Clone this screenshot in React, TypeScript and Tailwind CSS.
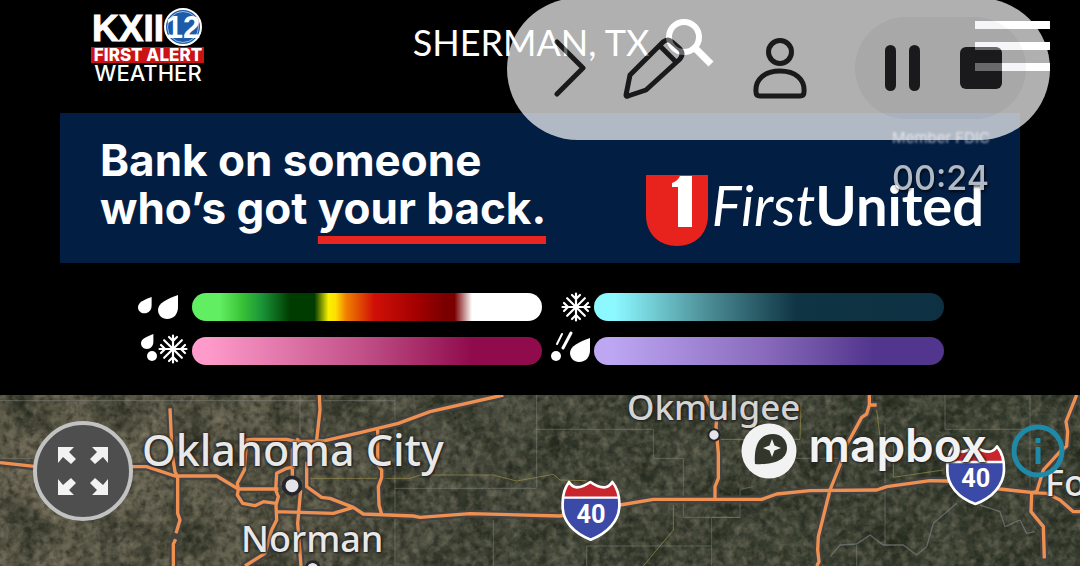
import type { ReactNode } from 'react'

const DROP = 'M20 0C9 4 0 8 0 15c0 5 4 9 9 9 7 0 11-5 11-12z'

// Map drawing units are a third of a pixel
const ROADS = [
  'M0 218L110 230H440L525 258H650L715 297H835',
  'M510 55L516 190L525 245L533 260V370L540 390L528 430',
  'M527 448L520 462V528',
  'M715 297L712 280L733 240L740 150L760 148H860L890 155L975 152L1080 128L1195 100L1290 65L1510 15',
  'M958 15L960 60L950 150',
  'M895 145L877 180V280',
  'M885 230L860 235L830 250L827 300L835 320L828 345L830 390L815 420L795 490L735 528',
  'M920 215V290L965 322L990 325L1060 352L1090 372L1240 378L1260 382L1410 371L1680 378L1860 345L1960 328H2285L2330 312L2430 302L2630 300L2660 290L2790 272L2840 273L3000 297L3100 308L3140 310L3180 330L3220 365H3240',
  'M715 298L712 315L728 340L765 347L790 335L828 340',
  'M830 365L1000 370L1060 352',
  'M902 300L893 400L903 528',
  'M1133 120V225L1145 240V262L1135 290L1137 345L1145 372',
  'M2115 15L2150 90L2148 110L2155 190V265L2145 290V325',
  'M2608 15V45H2630M2608 45L2600 72L2585 82L2540 165L2520 225L2490 300L2455 440L2453 480L2457 515L2450 528',
  'M3230 15L3198 95L3203 125L3200 168L3180 185L3130 240L3110 305L3095 308L3093 365L3130 410L3133 505',
]

const COUNTY_LINES =
  'M0 32H1185M1185 15V528M1185 295H1610M1610 15V290M1610 118H1960V205H2050V382H2220L2135 382V528M1480 390V528M1760 528V468H2135M2220 382V298L2260 290M2835 15V118H3090M3090 15V290M2655 100V465M2260 205H2540M2570 528V465M0 205H100M900 15V130'

const RIVERS =
  'M2490 500L2520 465L2570 462L2610 435L2650 465L2710 465L2750 495L2780 470L2800 400L2870 340M2940 345L3000 365L3015 410L3060 390L3080 430L3105 425'

const TRAILS =
  'M930 265H1230L1260 255H1480L1550 273L1660 253L1680 270L1760 272M2160 148H2400L2403 40M2020 345V420L1930 528M2630 60L2640 140L2680 160V262L2830 240'

function Snowflake({ x, y, r }: { x: number; y: number; r: number }) {
  return (
    <g transform={`translate(${x} ${y}) scale(${r / 14})`} stroke="#fff" strokeWidth="2.2" strokeLinecap="round" fill="none">
      {[0, 45, 90, 135, 180, 225, 270, 315].map((a) => (
        <path key={a} transform={`rotate(${a})`} d={a % 90 ? 'M0 0V-12.5' : 'M0 0V-13.5M-4 -12L0 -8L4 -12'} />
      ))}
    </g>
  )
}

function LegendIcon({ label, children }: { label: string; children: ReactNode }) {
  return (
    <svg role="img" aria-label={label} className="h-7 w-full overflow-visible" viewBox="0 0 54 28" preserveAspectRatio="xMinYMid slice" fill="#fff">
      {children}
    </svg>
  )
}

function Shield({ x, y }: { x: number; y: number }) {
  return (
    <g transform={`translate(${x} ${y})`}>
      <path
        d="M23 4Q33 20 47 20Q64 20 87 4Q109 20 128 20Q143 20 153 4Q176 32 174 76C173 120 139 158 88 177C37 158 3 120 4 76Q2 32 23 4Z"
        fill="#3b4aa6"
      />
      <path d="M23 4Q33 20 47 20Q64 20 87 4Q109 20 128 20Q143 20 153 4Q176 26 174 50H4Q5 26 23 4Z" fill="#c9252c" />
      <path d="M4 51H174" stroke="#fff" strokeWidth="7" />
      <path
        d="M23 4Q33 20 47 20Q64 20 87 4Q109 20 128 20Q143 20 153 4Q176 32 174 76C173 120 139 158 88 177C37 158 3 120 4 76Q2 32 23 4Z"
        fill="none"
        stroke="#fff"
        strokeWidth="8"
        strokeLinejoin="round"
      />
      <text x="89" y="126" textAnchor="middle" fontFamily="Roboto, sans-serif" fontWeight="700" fontSize="76" fill="#fff">
        40
      </text>
    </g>
  )
}

function StationLogo() {
  return (
    <svg width="116" height="76" viewBox="90 8 116 76" role="img" aria-label="KXII 12 First Alert Weather">
      <g fontFamily="Inter, sans-serif" fill="#fff">
        <text x="92" y="41" fontFamily="Liberation Sans, sans-serif" fontWeight="700" fontSize="37" stroke="#fff">KXII</text>
        <circle cx="183" cy="27" r="18" fill="#1c5ba8" stroke="#fff" strokeWidth="2" />
        <circle cx="183" cy="27" r="15.5" fill="none" stroke="#9dbbe0" strokeWidth="1" />
        <text x="183" y="38" textAnchor="middle" fontFamily="Liberation Sans, sans-serif" fontWeight="700" fontSize="31">12</text>
        <rect x="91" y="47" width="113" height="16" fill="#cc1212" />
        <text x="148" y="61" textAnchor="middle" fontWeight="800" fontSize="17">FIRST ALERT</text>
        <text x="148" y="81" textAnchor="middle" fontWeight="500" fontSize="22">WEATHER</text>
      </g>
    </svg>
  )
}

function Header() {
  return (
    <header className="grid h-[113px] grid-cols-[1fr_auto_1fr] items-start pt-2 pr-[30px] pl-[78px]">
      <a href="#home" className="justify-self-start pl-3">
        <StationLogo />
      </a>
      <button className="flex h-[68px] items-center gap-4 font-[Lato] text-[36px] leading-[68px] text-white">
        SHERMAN, TX
        <svg width="50" height="50" viewBox="0 0 50 50" fill="none" stroke="#fff">
          <circle cx="19" cy="20" r="15" strokeWidth="6" />
          <path d="M30 31L46 47" strokeWidth="7" />
        </svg>
      </button>
      <button aria-label="Menu" className="mt-3 flex w-[75px] flex-col gap-[13px] justify-self-end pt-px">
        <span className="h-2 bg-white" />
        <span className="h-2 bg-white" />
        <span className="h-2 bg-white" />
      </button>
    </header>
  )
}

function AdBanner() {
  return (
    <a href="#first-united" className="relative mx-[60px] flex h-[150px] items-start justify-between bg-[#031e43] pt-[23px] pr-[36px] pl-10 text-white">
      <p className="font-[Inter] text-[44px] leading-[48px] font-bold">
        Bank on someone
        <br />
        who’s got{' '}
        <span className="underline decoration-[#e8251f] decoration-8 underline-offset-[12px] [text-decoration-skip-ink:none]">your back.</span>
      </p>
      <div className="mt-[39px] flex items-start gap-1">
        <svg width="62" height="71" viewBox="0 0 62 71">
          <path d="M0 0H62V40C62 60 48 71 31 71S0 60 0 40Z" fill="#e8231d" />
          <path d="M26 8Q32 6 34 1H46V52H32V12H26Z" fill="#fff" />
        </svg>
        <span className="font-[Lato] text-[56px] leading-[60px]">
          <i>First</i>
          <b>United</b>
        </span>
      </div>
      <span className="absolute top-[14px] right-[30px] font-[Inter] text-[15px] text-[#a9afbd] blur-[1px]">Member FDIC</span>
    </a>
  )
}

function Legend() {
  return (
    <section className="mx-auto grid grid-cols-[54px_350px_52px_350px] gap-y-4 py-[30px] pl-0.5">
      <LegendIcon label="Rain">
        <path d={DROP} transform="translate(0 4) scale(.68)" />
        <path d={DROP} transform="translate(20 2)" />
      </LegendIcon>
      <div className="rounded-full bg-[linear-gradient(90deg,#62ee62_8%,#3bc437_14%,#1a9438_20%,#003c00_28%,#003c00_35%,#f8f000_39%,#ffe000_41%,#f08000_44%,#d01008_52%,#a00000_65%,#7a0000_72%,#7a0000_75%,#fff_80%)]" />
      <LegendIcon label="Snow">
        <Snowflake x={34} y={14} r={14} />
      </LegendIcon>
      <div className="rounded-full bg-[linear-gradient(90deg,#8cf8ff_6%,#4d8f97_32%,#0f3443_58%,#0d3142_100%)]" />
      <LegendIcon label="Wintry mix">
        <path d={DROP} transform="translate(3 -3) scale(.62)" />
        <circle cx="14" cy="19" r="5" />
        <Snowflake x={35} y={12} r={14} />
      </LegendIcon>
      <div className="rounded-full bg-[linear-gradient(90deg,#ff9bcb_4%,#c25289_48%,#8f0b4c_80%)]" />
      <LegendIcon label="Freezing rain">
        <path d="M20 -3L15 7" stroke="#fff" strokeWidth="2" strokeLinecap="round" />
        <path d="M29 -4L21 11" stroke="#fff" strokeWidth="3" strokeLinecap="round" />
        <circle cx="14" cy="19" r="5" />
        <path d={DROP} transform="translate(28 1)" />
      </LegendIcon>
      <div className="rounded-full bg-[linear-gradient(90deg,#bda6f2_5%,#8a6bbd_48%,#52358c_80%)]" />
    </section>
  )
}

function MapCanvas() {
  return (
    <svg
      className="absolute inset-0 h-full w-full [text-shadow:none]"
      viewBox="0 15 3240 513"
      preserveAspectRatio="xMinYMin slice"
      aria-hidden="true"
    >
      <defs>
        <linearGradient id="land">
          <stop offset="0" stopColor="#6b6553" />
          <stop offset=".25" stopColor="#605d4c" />
          <stop offset=".42" stopColor="#4a4d3f" />
          <stop offset="1" stopColor="#3d4435" />
        </linearGradient>
        <filter id="shade" x="0" y="0" width="100%" height="100%" colorInterpolationFilters="sRGB">
          <feTurbulence type="fractalNoise" baseFrequency=".05" numOctaves="3" seed="4" />
          <feColorMatrix values="0 0 0 0 .1  0 0 0 0 .11  0 0 0 0 .08  1.3 0 0 0 -.5" />
        </filter>
        <filter id="light" x="0" y="0" width="100%" height="100%" colorInterpolationFilters="sRGB">
          <feTurbulence type="fractalNoise" baseFrequency=".04" numOctaves="4" seed="11" />
          <feColorMatrix values="0 0 0 0 .6  0 0 0 0 .57  0 0 0 0 .48  0 .9 0 0 -.36" />
        </filter>
        <filter id="patches" x="0" y="0" width="100%" height="100%" colorInterpolationFilters="sRGB">
          <feTurbulence type="fractalNoise" baseFrequency=".008" numOctaves="3" seed="7" />
          <feColorMatrix values="0 0 0 0 .1  0 0 0 0 .13  0 0 0 0 .08  0 0 1.5 0 -.55" />
        </filter>
      </defs>
      <rect y="15" width="3240" height="513" fill="url(#land)" />
      <rect y="15" width="3240" height="513" filter="url(#patches)" />
      <rect y="15" width="3240" height="513" filter="url(#shade)" />
      <rect y="15" width="3240" height="513" filter="url(#light)" />
      <g fill="none" strokeLinejoin="round">
        <path d={COUNTY_LINES} stroke="#8b8d89" strokeOpacity=".45" strokeWidth="3" />
        <path d={RIVERS} stroke="#82878a" strokeOpacity=".6" strokeWidth="4" />
        <path d={TRAILS} stroke="#a39a4c" strokeOpacity=".6" strokeWidth="3" />
        <path d={ROADS.join('')} stroke="#444342" strokeWidth="23" strokeLinecap="round" />
        <path d={ROADS.join('')} stroke="#ee9150" strokeWidth="10" />
      </g>
      <g fill="#e4e4e8" stroke="#26252a">
        <circle cx="876" cy="287" r="25" strokeWidth="11" />
        <circle cx="938" cy="535" r="20" strokeWidth="8" />
        <circle cx="2142" cy="135" r="17" strokeWidth="6" />
      </g>
      <Shield x={1684} y={272} />
      <Shield x={2838} y={165} />
    </svg>
  )
}

function RadarMap() {
  return (
    <main className="relative min-h-[171px] flex-1 overflow-hidden bg-[#414233] font-['Noto_Sans'] leading-none font-medium whitespace-nowrap text-[#e8e8e8] [text-shadow:0_0_3px_#222,0_0_3px_#222,1px_1px_2px_#222]">
      <MapCanvas />
      <span className="absolute top-[33px] left-[142px] text-[43px]">Oklahoma City</span>
      <span className="absolute top-[126px] left-[241px] text-[36px]">Norman</span>
      <span className="absolute top-[-6px] left-[627px] text-[35px] text-[#d4d4d4]">Okmulgee</span>
      <span className="absolute top-[70px] left-[1045px] text-[36px]">Fort Smith</span>

      <button aria-label="Full screen" className="absolute top-[26px] left-[33px] size-[100px] rounded-full border-4 border-[#c2c2c2] bg-[#4e4e4e]">
        <svg className="mx-auto" width="50" height="48" viewBox="0 0 50 48" fill="#f2f2f2">
          <path id="corner" d="M0 0H16L11 5L18 12L13 17L5 10L0 16Z" />
          <use href="#corner" transform="matrix(-1 0 0 1 50 0)" />
          <use href="#corner" transform="matrix(1 0 0 -1 0 48)" />
          <use href="#corner" transform="matrix(-1 0 0 -1 50 48)" />
        </svg>
      </button>

      <div className="absolute top-7 right-[15px] flex items-center">
        <a href="#mapbox" className="flex items-start gap-3 font-[Inter] text-[46px] leading-[44px] font-semibold text-[#f2f2f2]">
          <svg width="56" height="56" viewBox="0 0 56 56">
            <circle cx="28" cy="28" r="27.5" fill="#f2f2f2" />
            <path d="M14 41C13 28 15 11 32 11C40 11 46 17 46 25C46 39 28 42 14 41Z" fill="#33372b" />
            <path d="M31 16L33.500 22.500L40 25L33.500 27.500L31 34L28.500 27.500L22 25L28.500 22.500Z" fill="#f2f2f2" />
          </svg>
          mapbox
        </a>
        <button aria-label="Map information" className="ml-6">
          <svg width="54" height="54" viewBox="0 0 54 54" fill="none" stroke="#1f8aa8">
            <circle cx="27" cy="27" r="24" strokeWidth="5" />
            <path d="M27 14V19M27 23V40" strokeWidth="5" />
          </svg>
        </button>
      </div>
    </main>
  )
}

function RecorderOverlay() {
  return (
    <div className="absolute top-[-2px] right-[30px] opacity-[.69]">
      <div className="flex h-[142px] w-[543px] items-center rounded-full bg-white pb-0.5 pl-[46px] text-[#272729]">
        <button aria-label="Collapse">
          <svg width="34" height="58" viewBox="0 0 34 58" fill="none" stroke="currentColor" strokeWidth="5" strokeLinecap="round" strokeLinejoin="round">
            <path d="M4 3L30 29L4 55" />
          </svg>
        </button>
        <button aria-label="Draw" className="ml-9">
          <svg width="62" height="62" viewBox="0 0 62 62" fill="none" stroke="currentColor" strokeWidth="5" strokeLinecap="round" strokeLinejoin="round">
            <path d="M3 58L7 38L40 5Q45 1 49 5L57 12Q61 17 57 22L23 53L5 59Q3 60 3 58ZM37 9L53 25" />
          </svg>
        </button>
        <button aria-label="Camera" className="ml-[68px]">
          <svg width="54" height="62" viewBox="0 0 54 62" fill="none" stroke="currentColor" strokeWidth="5" strokeLinejoin="round">
            <circle cx="27" cy="15" r="11.500" />
            <path d="M3 55C2 42 12 34 27 34S52 42 51 55Q51 59 47 59H7Q3 59 3 55Z" />
          </svg>
        </button>
        <div className="ml-12 flex h-[102px] w-[171px] items-center gap-10 rounded-full bg-[#f3f3f5] pl-[30px]">
          <button aria-label="Pause" className="flex gap-[13px]">
            <span className="h-[46px] w-[11px] rounded-full bg-current" />
            <span className="h-[46px] w-[11px] rounded-full bg-current" />
          </button>
          <button aria-label="Stop" className="size-[42px] rounded-md bg-current" />
        </div>
      </div>
      <time className="mt-[18px] mr-[61px] block text-right font-[Inter] text-[34px] leading-10 font-medium text-white [text-shadow:1px_2px_3px_#000]">
        00:24
      </time>
    </div>
  )
}

export default function App() {
  return (
    <div className="relative flex min-h-screen flex-col overflow-hidden bg-black">
      <Header />
      <AdBanner />
      <Legend />
      <RadarMap />
      <RecorderOverlay />
    </div>
  )
}
